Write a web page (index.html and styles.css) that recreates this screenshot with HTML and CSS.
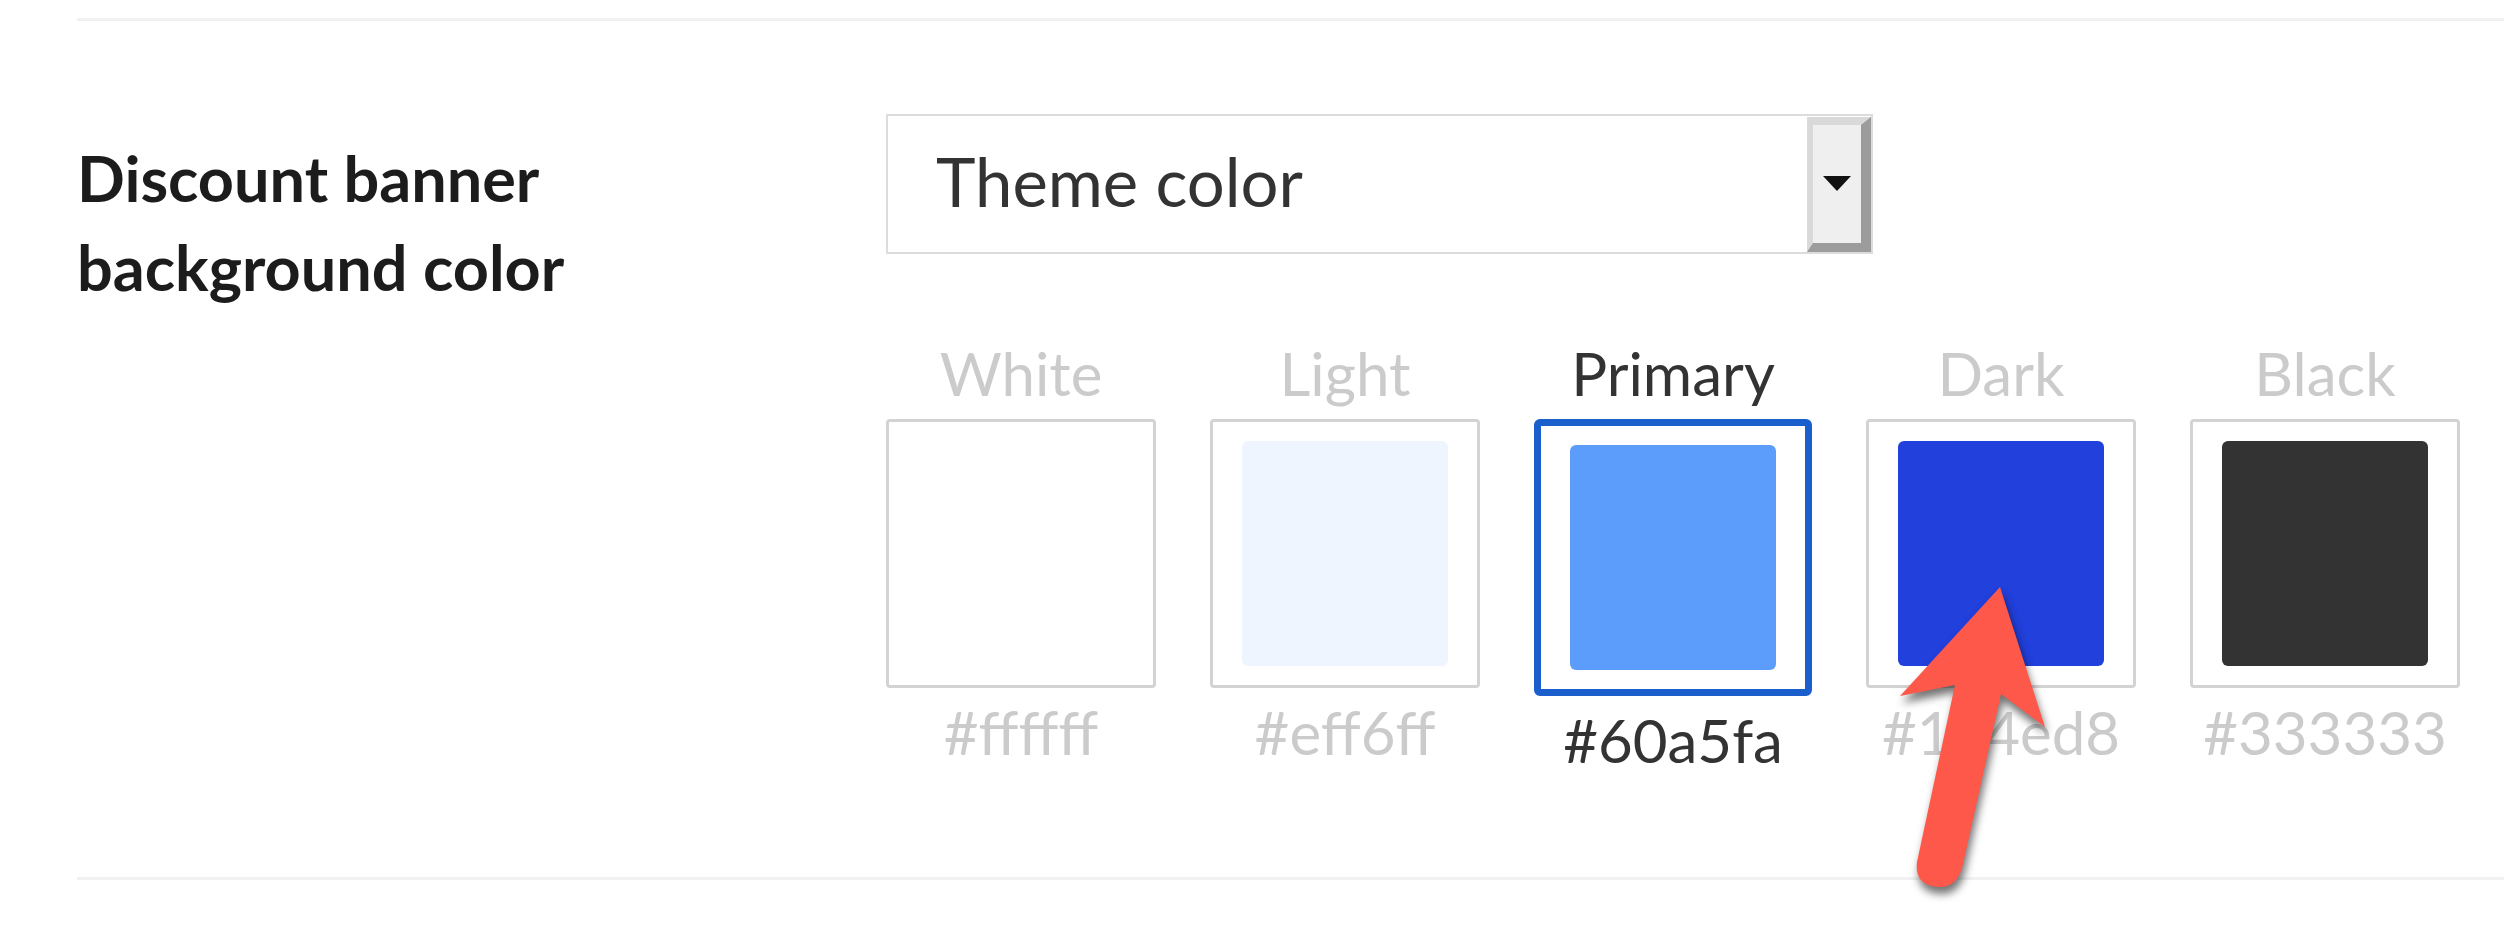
FILE: index.html
```html
<!DOCTYPE html>
<html lang="en">
<head>
<meta charset="utf-8">
<title>Discount banner background color</title>
<link rel="stylesheet" href="styles.css">
</head>
<body>
<div class="page">
  <div class="rule rule-top"></div>
  <div class="field">
    <div class="field-label">Discount banner<br>background color</div>
    <div class="field-control">
      <div class="select">
        <span class="select-value">Theme color</span>
        <span class="select-btn">
          <svg class="caret" width="28" height="15" viewBox="0 0 28 15"><polygon points="0,0 28,0 14,15" fill="#111"/></svg>
        </span>
      </div>
      <div class="swatches">
        <div class="swatch">
          <div class="swatch-name">White</div>
          <div class="swatch-box"><div class="swatch-fill fill-white"></div></div>
          <div class="swatch-hex">#ffffff</div>
        </div>
        <div class="swatch">
          <div class="swatch-name">Light</div>
          <div class="swatch-box"><div class="swatch-fill fill-light"></div></div>
          <div class="swatch-hex">#eff6ff</div>
        </div>
        <div class="swatch is-selected">
          <div class="swatch-name">Primary</div>
          <div class="swatch-box"><div class="swatch-fill fill-primary"></div></div>
          <div class="swatch-hex">#60a5fa</div>
        </div>
        <div class="swatch">
          <div class="swatch-name">Dark</div>
          <div class="swatch-box"><div class="swatch-fill fill-dark"></div></div>
          <div class="swatch-hex">#1d4ed8</div>
        </div>
        <div class="swatch">
          <div class="swatch-name">Black</div>
          <div class="swatch-box"><div class="swatch-fill fill-black"></div></div>
          <div class="swatch-hex">#333333</div>
        </div>
      </div>
    </div>
  </div>
  <div class="rule rule-bottom"></div>
  <svg class="arrow" width="2504" height="944" viewBox="0 0 2504 944">
    <path d="M2000,587 L2045,727 L2001,694 L1963,864 Q1958,887 1940,887 Q1914,886 1917,862 L1955,685 L1900,696 Z" fill="#fd5849"/>
  </svg>
</div>
</body>
</html>
```

FILE: styles.css
```css
html, body {
  margin: 0;
  padding: 0;
  background: #ffffff;
}

.page {
  position: relative;
  width: 2504px;
  height: 944px;
  overflow: hidden;
  font-family: Lato, "Open Sans", "Liberation Sans", sans-serif;
}

.rule {
  height: 3px;
  background: #f1f1f1;
  margin-left: 77px;
}

.rule-top {
  margin-top: 18px;
}

.rule-bottom {
  margin-top: 101px;
}

.field {
  display: flex;
  padding-left: 77px;
  margin-top: 93px;
}

.field-label {
  width: 809px;
  flex: none;
  margin-top: 19px;
  font-weight: 700;
  font-size: 63px;
  line-height: 89px;
  color: #1c1c1c;
}

.field-control {
  display: flex;
  flex-direction: column;
}

.select {
  width: 983px;
  height: 136px;
  border: 2px solid #dcdcdc;
  display: flex;
  align-items: stretch;
  background: #fff;
}

.select-value {
  flex: 1;
  display: flex;
  align-items: center;
  padding-left: 48px;
  padding-bottom: 6px;
  font-size: 67px;
  color: #333;
}

.select-btn {
  width: 48px;
  margin: 1px 0 0 0;
  border-style: solid;
  border-width: 8px 10px 9px 6px;
  border-color: #d9d9d9 #9c9c9c #9c9c9c #d9d9d9;
  background: #efefef;
  display: flex;
  align-items: center;
  justify-content: center;
}

.caret {
  display: block;
  margin-top: -2px;
}

.swatches {
  display: flex;
  align-items: flex-start;
  gap: 54px;
  margin-top: 83px;
}

.swatch {
  display: flex;
  flex-direction: column;
  align-items: center;
}

.swatch-name,
.swatch-hex {
  font-size: 60px;
  line-height: 72px;
  color: #cbcbcb;
  white-space: nowrap;
}

.swatch-name {
  margin-bottom: 10px;
}

.swatch-hex {
  margin-top: 8px;
}

.swatch-box {
  border: 3px solid #d3d3d3;
  border-radius: 4px;
  padding: 19px 29px;
  background: #fff;
}

.swatch-fill {
  width: 206px;
  height: 225px;
  border-radius: 6px;
}

.is-selected .swatch-box {
  border: 7px solid #1a5fcc;
  border-radius: 6px;
}

.is-selected .swatch-name,
.is-selected .swatch-hex {
  color: #333;
}

.fill-white { background: #ffffff; }
.fill-light { background: #eef5ff; }
.fill-primary { background: #5c9dfb; }
.fill-dark { background: #2140dc; }
.fill-black { background: #333333; }

.arrow {
  position: absolute;
  left: 0;
  top: 0;
  pointer-events: none;
  filter: drop-shadow(2px 7px 4px rgba(0, 0, 0, 0.55));
}
```
